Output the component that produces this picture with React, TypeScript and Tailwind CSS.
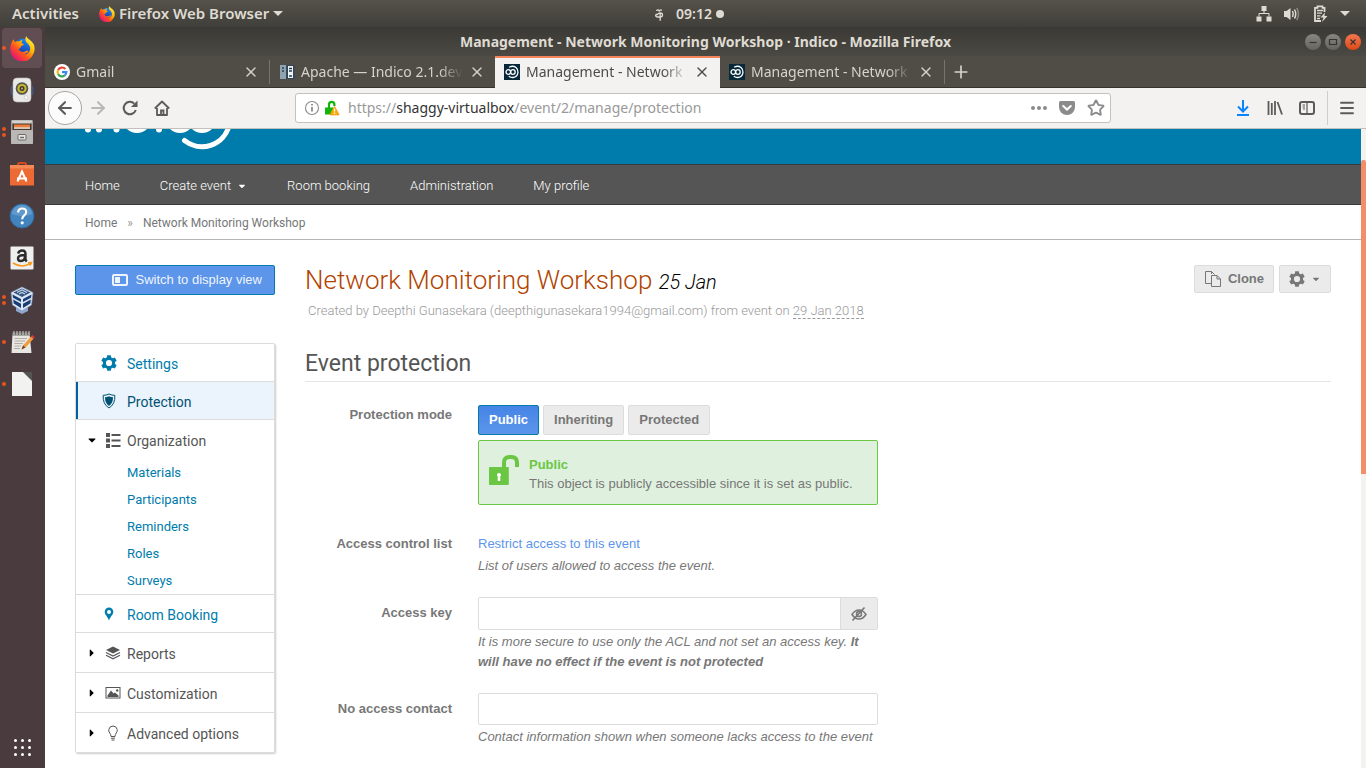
import React from "react";
import { X, Plus, ArrowLeft, ArrowRight, Menu, Star } from "lucide-react";
import { FaCaretDown, FaCaretRight } from "react-icons/fa";

interface IconProps {
  className?: string;
}

const FirefoxIcon: React.FC<IconProps> = ({ className }) => (
  <svg viewBox="0 0 24 24" className={className} aria-hidden="true">
    <defs>
      <linearGradient id="fx-body" x1="0.85" y1="0.1" x2="0.15" y2="0.9">
        <stop offset="0" stopColor="#fff23a" />
        <stop offset="0.35" stopColor="#ffb000" />
        <stop offset="0.65" stopColor="#ff5022" />
        <stop offset="1" stopColor="#e3107a" />
      </linearGradient>
      <linearGradient id="fx-globe" x1="0.7" y1="0" x2="0.3" y2="1">
        <stop offset="0" stopColor="#1a8cff" />
        <stop offset="1" stopColor="#1a2f96" />
      </linearGradient>
    </defs>
    <circle cx="12.5" cy="11" r="8.5" fill="url(#fx-globe)" />
    <path
      d="M15.5 0c1 3 5.500 4 7.500 8.500 1 3 .8 6.500-1 9.500A11.500 11.500 0 0 1 1 17C-.5 12.500.3 8 2.500 4.500L3.500 3l1 3C6 5 7 4.800 8.500 5.200L12 3.500 11 7c1 .4 2 .6 2.300 1-.3 1.200-2.500 1.300-3 2.500-.1 1-.9 1.600-2.300 1.800.8 2.700 4.500 4 7.500 2.200 1-.6 2-.5 2.200.2-1.200 2-3.500 3-5.700 2.700 5 1.200 8-3 7.200-6.700-.6-2-1.600-3-3-4.200C14.500 5 14.300 2.500 15.500 0z"
      fill="url(#fx-body)"
    />
  </svg>
);

const RhythmboxIcon = () => (
  <svg viewBox="0 0 26 26" className="size-[26px]" aria-hidden="true">
    <path d="M3 9a11 11 0 0 0 0 9M23 9a11 11 0 0 1 0 9" stroke="#46557a" strokeWidth="1.500" fill="none" />
    <rect x="4" y="1" width="18" height="24" rx="4" fill="#e9e9e7" stroke="#bbb" strokeWidth=".6" />
    <circle cx="13" cy="11.500" r="6.300" fill="#55564f" />
    <circle cx="13" cy="11.500" r="4.600" fill="#c9b62b" />
    <circle cx="13" cy="11.500" r="2.500" fill="#3c3c30" />
    <circle cx="13" cy="11.500" r="1" fill="#b9b7a0" />
    <circle cx="17" cy="20.500" r="1.800" fill="#fff" stroke="#bbb" strokeWidth=".6" />
  </svg>
);

const FilesIcon = () => (
  <svg viewBox="0 0 24 26" className="size-[26px]" aria-hidden="true">
    <rect x="1" y="1" width="22" height="24" rx="1.500" fill="#a3a29f" />
    <path d="M1.500 1.500h21l-2 4h-17z" fill="#d4d3d0" />
    <rect x="2.500" y="4.500" width="19" height="8" fill="#453632" />
    <path d="M4 5.500h16v3H4z" fill="#ef7c36" />
    <path d="M4 8.300h16v1.500H4z" fill="#f6ead8" />
    <rect x="1" y="11" width="22" height="14" rx="1" fill="#b9b8b5" />
    <rect x="8" y="15.500" width="8" height="5.500" rx="1" fill="#e7e6e4" stroke="#6b6a68" />
    <path d="M10 18.500h4" stroke="#6b6a68" strokeWidth="1.500" />
  </svg>
);

const SoftwareIcon = () => (
  <svg viewBox="0 0 26 26" className="size-[26px]" aria-hidden="true">
    <path d="M9 6V3.500Q9 2 10.500 2h5Q17 2 17 3.500V6" stroke="#d8481c" strokeWidth="2" fill="none" />
    <path d="M1 5h24v19.500H1z" fill="#ed6a34" />
    <path d="M1 4h24v3.500H1z" fill="#f58a55" />
    <path d="M8.500 20.500 13 10.500l4.500 10M8 17.500h10" stroke="#fff" strokeWidth="2" fill="none" />
  </svg>
);

const HelpIcon = () => (
  <svg viewBox="0 0 26 26" className="size-[26px]" aria-hidden="true">
    <circle cx="13" cy="13" r="12" fill="#4384bf" stroke="#2f6ba3" />
    <path d="M2.500 11a10.600 10.600 0 0 1 21 0q-10 4-21 0z" fill="#6ea3d3" opacity=".7" />
    <path d="M9 9.500q.5-4 4.200-4 4 0 4 3.500 0 2-2.200 3.600-1.800 1.300-1.800 3.600" stroke="#fff" strokeWidth="2.200" fill="none" />
    <circle cx="13.200" cy="19.800" r="1.600" fill="#fff" />
  </svg>
);

const AmazonIcon = () => (
  <svg viewBox="0 0 24 24" className="size-6" aria-hidden="true">
    <rect x=".5" y=".5" width="23" height="23" rx="1" fill="#efefef" />
    <path d="M8 7.500q1-3 4.300-3 3.200 0 3.200 3.500v5q0 1.300 1.300 2.500M15 9q-7 0-7 3.500 0 2.500 2.700 2.500 4.300 0 4.300-5" stroke="#2b2b2b" strokeWidth="2.400" fill="none" />
    <path d="M3 17q8.500 5.500 17.500.7M18 16.700l3.500-.2-1.500 3" stroke="#f79a1c" strokeWidth="1.500" fill="none" />
  </svg>
);

const VirtualBoxIcon = () => (
  <svg viewBox="0 0 26 28" className="h-7 w-[26px]" aria-hidden="true">
    <path d="M7 20l6 4 6-4v5l-6 3-6-3z" fill="#8ea7cf" />
    <path d="M13 1 24 6.500 22.500 19 13 25 3.500 19 2 6.500z" fill="#dce6f4" stroke="#7b93bb" strokeWidth=".6" />
    <path d="M13 2.500 21.500 6.500 13 11 4.500 6.500z" fill="#33557f" />
    <path d="M8 6.500 13 4l5 2.500M10 8l3-1.500L16 8" stroke="#c4d4ea" strokeWidth="1.200" fill="none" />
    <path d="M3.500 8.500 12 13v3L4 11.800zM4.200 13.500 12 17.800V22l-7.300-4.500zM22.500 8.500 14 13v3l8-4.200zM21.800 13.500 14 17.800V22l7.300-4.500z" fill="#173e73" />
  </svg>
);

const EditorIcon = () => (
  <svg viewBox="0 0 26 26" className="size-[26px]" aria-hidden="true">
    <path d="M3.500 4h17l2 20h-20z" fill="#e8e7e2" />
    <path d="M3 3.500h18v3H3z" fill="#6f6e6a" />
    <path d="M5 2v4M8 2v4M11 2v4M14 2v4M17 2v4M20 2v4" stroke="#d9d8d4" strokeWidth="1" />
    <path d="M5.500 9.500H18M5.500 12H16M5.500 14.500H14M5.500 17H12M5 19.500h6" stroke="#adaca8" strokeWidth="1" />
    <path d="m12.500 20.500 1.500-4 8-9 2.500 2.300-8 8.700z" fill="#f09b3c" />
    <path d="m22 7.500 1.300-1.500 2.500 2.300-1.300 1.500z" fill="#e1393d" />
    <path d="m12.500 20.500 1.500-4 2.500 2z" fill="#5b4632" />
  </svg>
);

const DocumentIcon = () => (
  <svg viewBox="0 0 24 26" className="h-[26px] w-6" aria-hidden="true">
    <path d="M2 1h12l8 8v16H2z" fill="#f2f2f1" />
    <path d="M13 1h9v9z" fill="#555" />
  </svg>
);

const GoogleIcon = () => (
  <svg viewBox="0 0 16 16" className="size-4 shrink-0" aria-hidden="true">
    <circle cx="8" cy="8" r="8" fill="#fff" />
    <g fill="none" strokeWidth="2.200">
      <path d="M11.300 4.900A4.400 4.400 0 0 0 4.100 6" stroke="#ea4335" />
      <path d="M4.100 6a4.400 4.400 0 0 0 0 4" stroke="#fbbc05" />
      <path d="M4.100 10a4.400 4.400 0 0 0 6.700 1.400" stroke="#34a853" />
      <path d="M10.800 11.400A4.400 4.400 0 0 0 12.400 8.100H8" stroke="#4285f4" />
    </g>
  </svg>
);

const ApacheDocsIcon = () => (
  <svg viewBox="0 0 16 16" className="size-4 shrink-0" aria-hidden="true">
    <rect x="1" y="1" width="6" height="14" fill="#8fa3b3" />
    <rect x="7.500" y="1" width="8" height="14" fill="#2f4758" />
    <rect x="9" y="2" width="5" height="12" fill="#eef3f5" />
    <path d="M3 4h2M3 7h2M10 4.500h3M10 7h3M10 12h3" stroke="#2b4050" strokeWidth="1.300" />
  </svg>
);

const IndicoFavicon = () => (
  <svg viewBox="0 0 16 16" className="size-4 shrink-0" aria-hidden="true">
    <rect width="16" height="16" fill="#07283a" />
    <g stroke="#fff" fill="none" strokeWidth="1.300">
      <circle cx="4.300" cy="8" r="2.300" />
      <circle cx="8.900" cy="8" r="2.300" />
      <path d="M5.500 3Q9 1.300 12 3.500q2.300 2 2 5-.6 4.500-5 5-2.300.1-3.700-1" strokeLinecap="round" />
    </g>
  </svg>
);

const GearIcon = () => (
  <svg viewBox="0 0 16 16" className="size-4" aria-hidden="true">
    <circle cx="8" cy="8" r="4.600" fill="none" stroke="currentColor" strokeWidth="3" />
    {[0, 60, 120, 180, 240, 300].map((angle) => (
      <path key={angle} d="M6.200.2h3.600l.5 3.300H5.700z" fill="currentColor" transform={`rotate(${angle} 8 8)`} />
    ))}
  </svg>
);

const dockItems = [
  { name: "Firefox", icon: <FirefoxIcon className="size-[25px]" />, dots: 1, active: true },
  { name: "Rhythmbox", icon: <RhythmboxIcon />, dots: 0 },
  { name: "Files", icon: <FilesIcon />, dots: 2 },
  { name: "Ubuntu Software", icon: <SoftwareIcon />, dots: 0 },
  { name: "Help", icon: <HelpIcon />, dots: 0 },
  { name: "Amazon", icon: <AmazonIcon />, dots: 0 },
  { name: "VirtualBox", icon: <VirtualBoxIcon />, dots: 2 },
  { name: "Text Editor", icon: <EditorIcon />, dots: 1 },
  { name: "LibreOffice", icon: <DocumentIcon />, dots: 1 },
];

const TopBar = () => (
  <header className="grid h-[27px] shrink-0 grid-cols-3 items-center bg-linear-to-b from-[#56524a] to-[#403f3a] pr-4 pl-3 font-semibold text-[#dfdbd2]">
    <div className="flex items-center gap-5 text-[15px]">
      <button>Activities</button>
      <button className="flex items-center gap-1">
        <FirefoxIcon className="size-4" />
        Firefox Web Browser
        <svg viewBox="0 0 10 5" className="h-[5px] w-[10px]" aria-hidden="true">
          <path d="M0 0h10L5 5z" fill="currentColor" />
        </svg>
      </button>
    </div>
    <div className="flex items-center justify-center gap-3 pl-4 text-sm">
      <svg viewBox="0 0 10 14" className="h-[14px] w-[10px]" fill="none" stroke="currentColor" strokeWidth="1.300" aria-hidden="true">
        <path d="M2.500 4q1.200-2.200 2.700 0 1.300-2 2.600-.4M1.500 7.500h2q1-1.500 2.700-1.500 2.300 0 2.300 2t-2.300 2H3.800Q1.600 10 1.600 8M6.200 6v7.800" />
      </svg>
      <button className="flex items-center gap-1">
        09:12
        <span className="size-2 rounded-full bg-[#dfdbd2]" />
      </button>
    </div>
    <button className="flex items-center justify-end gap-3" aria-label="System menu">
      <svg viewBox="0 0 16 16" className="size-4" aria-hidden="true">
        <path d="M5.500 0h5v5h-5zM.5 10.500h5v5h-5zM10.500 10.500h5v5h-5z" fill="currentColor" />
        <path d="M8 5v2.500M3 10.500v-3h10v3" stroke="currentColor" fill="none" />
      </svg>
      <svg viewBox="0 0 16 16" className="size-4" aria-hidden="true">
        <path d="M0 5h2.500L6.500 2v12l-4-3H0z" fill="currentColor" />
        <path d="M8.500 5q1.500 3 0 6M10.500 3.500q2.500 4.500 0 9" stroke="currentColor" strokeWidth="1.500" fill="none" />
        <path d="M12.700 2q3.600 6 0 12" stroke="#8a877f" strokeWidth="1.500" fill="none" />
      </svg>
      <svg viewBox="0 0 16 17" className="h-[17px] w-4" aria-hidden="true">
        <path d="M12.500 7V2.800H10.500V1.300h-5v1.500H3V16h6" stroke="currentColor" strokeWidth="1.800" fill="none" />
        <path d="M5 5.500h6M5 8.200h5M5 10.900h3.500M5 13.500h3" stroke="currentColor" strokeWidth="1.300" />
        <path d="m13 7.500-4.500 5h3L10 17l5.500-6h-3z" fill="currentColor" />
      </svg>
      <svg viewBox="0 0 10 5" className="h-[5px] w-[10px]" aria-hidden="true">
        <path d="M0 0h10L5 5z" fill="currentColor" />
      </svg>
    </button>
  </header>
);

const Dock = () => (
  <nav className="flex w-[45px] shrink-0 flex-col items-center bg-[#4a3b3f] pr-px" aria-label="Dock">
    {dockItems.map((item) => (
      <button key={item.name} aria-label={item.name} className="relative flex h-[42px] w-full items-center justify-center">
        <span
          className={`flex size-10 items-center justify-center rounded ${item.active ? "bg-[#604e53]" : ""}`}
        >
          {item.icon}
        </span>
        <span className="absolute inset-y-0 left-0.5 flex flex-col justify-center gap-0.5">
          {Array.from({ length: item.dots }, (_, i) => (
            <span key={i} className="size-1 rounded-full bg-[#e95420]" />
          ))}
        </span>
      </button>
    ))}
    <button aria-label="Show Applications" className="mt-auto mb-3 grid grid-cols-3 gap-1">
      {Array.from({ length: 9 }, (_, i) => (
        <span key={i} className="size-[3px] rounded-full bg-white" />
      ))}
    </button>
  </nav>
);

const tabs = [
  { title: "Gmail", icon: <GoogleIcon /> },
  { title: "Apache — Indico 2.1.dev0", icon: <ApacheDocsIcon /> },
  { title: "Management - Network Monitoring", icon: <IndicoFavicon />, active: true },
  { title: "Management - Network Monitoring", icon: <IndicoFavicon /> },
];

const WindowTitle = () => (
  <div className="relative flex h-[29px] shrink-0 items-center justify-center bg-linear-to-b from-[#3a3935] to-[#4b4943]">
    <h1 className="text-sm font-bold text-[#dfdbd2]">
      Management - Network Monitoring Workshop · Indico - Mozilla Firefox
    </h1>
    <div className="absolute right-[5px] flex gap-1">
      {["Minimize", "Maximize", "Close"].map((name) => (
        <button
          key={name}
          aria-label={name}
          className={`flex size-4 items-center justify-center rounded-full ${
            name === "Close"
              ? "bg-linear-to-b from-[#f4764d] to-[#dd4814]"
              : "bg-linear-to-b from-[#888680] to-[#66645e]"
          }`}
        >
          <svg viewBox="0 0 16 16" className="size-4" fill="none" stroke="#35342f" strokeWidth="1.200" aria-hidden="true">
            {name === "Minimize" && <path d="M4.500 8.500h7" />}
            {name === "Maximize" && <path d="M4.500 5.500h7v5h-7z" />}
            {name === "Close" && <path d="m5.500 5.500 5 5m0-5-5 5" />}
          </svg>
        </button>
      ))}
    </div>
  </div>
);

const TabStrip = () => (
  <div className="flex h-8 shrink-0 bg-[#504d46]">
    {tabs.map((tab, index) => (
      <div
        key={index}
        className={`flex w-[225px] items-center gap-1.5 pr-2.5 pl-[9px] text-sm ${
          tab.active
            ? "border-t-2 border-t-[#f58359] bg-[#f3f2f1] pb-0.5 text-[#4c4c4c]"
            : "border-b border-b-[#35342f] text-[#d7d3ca]"
        }`}
      >
        {tab.icon}
        <button className="min-w-0 flex-1 overflow-hidden mask-r-from-85% text-left whitespace-nowrap">
          {tab.title}
        </button>
        <button aria-label="Close tab">
          <X className="size-4" strokeWidth={2} />
        </button>
        {(index === 0 || index === 3) && <span className="-mr-2.5 ml-1 h-6 w-px bg-[#77746c]" />}
      </div>
    ))}
    <div className="flex flex-1 items-center border-b border-b-[#35342f] pl-1.5 text-[#d7d3ca]">
      <button aria-label="New tab">
        <Plus className="size-5" strokeWidth={2} />
      </button>
    </div>
  </div>
);

const BrowserToolbar = () => (
  <div className="flex h-[41px] shrink-0 items-center border-b border-[#c2c0bd] bg-[#f3f2f1] text-[#5b5b5b]">
    <div className="flex items-center pl-[3px]">
      <button aria-label="Back" className="flex size-[34px] items-center justify-center rounded-full border border-[#a6a5a3] bg-[#fbfbfb]">
        <ArrowLeft className="size-5" strokeWidth={2.5} />
      </button>
      <button aria-label="Forward" className="flex w-8 justify-center text-[#b9b8b7]">
        <ArrowRight className="size-5" strokeWidth={2.5} />
      </button>
      <button aria-label="Reload" className="flex w-8 justify-center">
        <svg viewBox="0 0 16 16" className="size-4" aria-hidden="true">
          <path d="M13.800 10A6.200 6.200 0 1 1 12.300 3.600" fill="none" stroke="currentColor" strokeWidth="2" />
          <path d="M15.500.5V7H9z" fill="currentColor" />
        </svg>
      </button>
      <button aria-label="Home" className="flex w-8 justify-center">
        <svg viewBox="0 0 16 16" className="size-4" fill="none" stroke="currentColor" strokeWidth="1.800" aria-hidden="true">
          <path d="M.8 8.500 8 1.500l7.200 7M3 8v7h10V8" strokeLinejoin="round" />
          <path d="M7 15v-4.500h2.500V15" />
        </svg>
      </button>
    </div>
    <div className="ml-[117px] flex h-[30px] w-[816px] items-center rounded-[3px] border border-[#c4c2bf] bg-white pr-[5px] pl-2 text-[#8b8b8b]">
      <button aria-label="Site information">
        <svg viewBox="0 0 16 16" className="size-4" fill="none" stroke="currentColor" aria-hidden="true">
          <circle cx="8" cy="8" r="6.500" strokeWidth="1.100" />
          <path d="M8 7v4.500M8 4v1.600" strokeWidth="1.800" />
        </svg>
      </button>
      <button aria-label="Connection warning" className="ml-1">
        <svg viewBox="0 0 16 16" className="size-4" aria-hidden="true">
          <path d="M5 8V4.500a2.700 2.700 0 0 1 5.400 0V6" stroke="#12b50c" strokeWidth="2.200" fill="none" />
          <path d="M1 7.500h8v7H1z" fill="#12b50c" />
          <path d="M10.500 6.500 15 14.800H6z" fill="#ffa90a" stroke="#f59b00" strokeLinejoin="round" />
          <path d="M10.500 8.500v3M10.500 12.500V14" stroke="#fff" strokeWidth="1.300" />
        </svg>
      </button>
      <a href="#address" className="ml-2 flex-1 text-sm text-[#999]">
        https://<span className="text-[#333]">shaggy-virtualbox</span>/event/2/manage/protection
      </a>
      <div className="flex items-center gap-3">
        <button aria-label="Page actions">
          <svg viewBox="0 0 16 16" className="size-4" fill="currentColor" aria-hidden="true">
            <circle cx="2" cy="8" r="2" />
            <circle cx="8" cy="8" r="2" />
            <circle cx="14" cy="8" r="2" />
          </svg>
        </button>
        <button aria-label="Save to Pocket">
          <svg viewBox="0 0 16 16" className="size-4" aria-hidden="true">
            <path d="M1.500 1h13Q16 1 16 2.500V7q0 3.300-2.300 5.700Q11.300 15 8 15t-5.700-2.300Q0 10.300 0 7V2.500Q0 1 1.500 1z" fill="currentColor" />
            <path d="M4.200 6 8 9.600 11.800 6" stroke="#fff" strokeWidth="2" fill="none" strokeLinecap="round" />
          </svg>
        </button>
        <button aria-label="Bookmark">
          <Star className="size-[18px]" strokeWidth={2.5} />
        </button>
      </div>
    </div>
    <div className="ml-auto flex items-center gap-4 pr-2.5">
      <button aria-label="Downloads" className="text-[#0a84ff]">
        <svg viewBox="0 0 16 16" className="size-4" fill="none" stroke="currentColor" strokeWidth="2" aria-hidden="true">
          <path d="M8 0v11M3 6.500l5 5 5-5M2 15h12" />
        </svg>
      </button>
      <button aria-label="Library">
        <svg viewBox="0 0 16 16" className="size-4" fill="none" stroke="currentColor" strokeWidth="1.800" aria-hidden="true">
          <path d="M1.500 1v14M4.800 3v12M8 1v14M10.500 2l4.500 12.500" />
        </svg>
      </button>
      <button aria-label="Sidebars">
        <svg viewBox="0 0 16 16" className="size-4" fill="none" stroke="currentColor" aria-hidden="true">
          <rect x="1" y="2" width="14" height="12" rx="2" strokeWidth="2" />
          <path d="M8 2v12M3.500 5H6M3.500 7H6M4 9h2" strokeWidth="1.200" />
        </svg>
      </button>
      <span className="-mr-1.5 -ml-1 h-[34px] w-px bg-[#d0cecb]" />
      <button aria-label="Open menu">
        <Menu className="size-[18px]" strokeWidth={2.5} />
      </button>
    </div>
  </div>
);

const IndicoLogo = () => (
  <svg viewBox="0 0 160 24" className="h-6 w-40" fill="none" stroke="#fff" strokeWidth="6" strokeLinecap="round" aria-label="indico" role="img">
    <path d="M10-4V0.500M21-4V0.500M38.500-4V0.500M81-4V0.500" />
    <circle cx="59" cy="-10.500" r="11.500" />
    <circle cx="102" cy="-10.500" r="11.500" />
    <circle cx="124" cy="-10.500" r="11.500" />
    <path d="M106.500 11.500A28 28 0 0 0 151-3" strokeWidth="5" />
  </svg>
);

const navLinks = ["Home", "Create event", "Room booking", "Administration", "My profile"];

const SiteHeader = () => (
  <>
    <div className="h-[35px] shrink-0 overflow-hidden bg-[#007cac] pl-[33px]">
      <IndicoLogo />
    </div>
    <nav className="flex h-[41px] shrink-0 items-center gap-10 border-y border-[#3b3b3b] bg-[#555] px-10 pt-0.5 font-[Roboto,sans-serif] text-[13px] font-light text-white">
      {navLinks.map((link) => (
        <a key={link} href="#nav" className="flex items-center gap-1.5">
          {link}
          {link === "Create event" && <FaCaretDown className="size-2.5" />}
        </a>
      ))}
    </nav>
    <div className="flex h-[35px] shrink-0 items-center gap-2.5 border-b border-[#b5b5b5] px-10 pt-0.5 font-[Roboto,sans-serif] text-xs text-[#777]">
      <a href="#home">Home</a>
      <span className="text-[#999]">»</span>
      <a href="#event">Network Monitoring Workshop</a>
    </div>
  </>
);

const ShieldIcon = () => (
  <svg viewBox="0 0 14 16" className="h-4 w-3.5" aria-hidden="true">
    <path d="M7 1q3 1.500 5.800 1.300Q13.500 11 7 15 .5 11 1.200 2.300 4 2.500 7 1z" fill="none" stroke="currentColor" />
    <path d="M7 3.300q2 .9 4 .9Q11.200 10 7 13 2.800 10 3 4.200q2 0 4-.9z" fill="currentColor" />
  </svg>
);

const ListIcon = () => (
  <svg viewBox="0 0 16 16" className="size-4" fill="currentColor" aria-hidden="true">
    <path d="M1 1h4v4H1zM1 6.500h4v4H1zM1 12h4v4H1zM6.500 2h9v2h-9zM6.500 7.500h9v2h-9zM6.500 13h9v2h-9z" />
  </svg>
);

const PinIcon = () => (
  <svg viewBox="0 0 10 14" className="h-3.5 w-2.5" aria-hidden="true">
    <path fillRule="evenodd" d="M5 .5a4.300 4.300 0 0 1 4.300 4.300C9.300 7.500 6.500 9.500 5 13.500 3.500 9.500.7 7.500.7 4.800A4.300 4.300 0 0 1 5 .5zM5 3a2 2 0 1 0 0 4 2 2 0 0 0 0-4z" fill="currentColor" />
  </svg>
);

const LayersIcon = () => (
  <svg viewBox="0 0 16 14" className="h-3.5 w-4" aria-hidden="true">
    <path d="M8 .5 15 4 8 7.500 1 4z" fill="currentColor" />
    <path d="m1 6.500 7 3.500 7-3.500M1 9.300l7 3.500 7-3.500" stroke="currentColor" strokeWidth="1.200" fill="none" />
  </svg>
);

const ImageIcon = () => (
  <svg viewBox="0 0 16 12" className="h-3 w-4" aria-hidden="true">
    <rect x="1" y=".5" width="14" height="10.500" fill="none" stroke="currentColor" />
    <path d="M2.500 10V8.500L6 3.500l2.500 3 1.500-1 3.500 3V10z" fill="currentColor" />
    <circle cx="12.200" cy="3.500" r="1.200" fill="currentColor" />
  </svg>
);

const BulbIcon = () => (
  <svg viewBox="0 0 12 16" className="h-4 w-3" fill="none" stroke="currentColor" aria-hidden="true">
    <path d="M4 11.500Q4 9.500 2.700 8 1.500 6.500 1.800 4.500 2.500 1 6 1t4.200 3.500Q10.500 6.500 9.300 8 8 9.500 8 11.500zM4 13.200h4M4.500 15h3" />
  </svg>
);

interface SideSection {
  title: string;
  icon: React.ReactNode;
  kind: "link" | "group";
  selected?: boolean;
  children?: string[];
}

const sections: SideSection[] = [
  { title: "Settings", icon: <GearIcon />, kind: "link" },
  { title: "Protection", icon: <ShieldIcon />, kind: "link", selected: true },
  {
    title: "Organization",
    icon: <ListIcon />,
    kind: "group",
    children: ["Materials", "Participants", "Reminders", "Roles", "Surveys"],
  },
  { title: "Room Booking", icon: <PinIcon />, kind: "link" },
  { title: "Reports", icon: <LayersIcon />, kind: "group" },
  { title: "Customization", icon: <ImageIcon />, kind: "group" },
  { title: "Advanced options", icon: <BulbIcon />, kind: "group" },
];

const SideMenu = () => (
  <aside className="w-[200px] shrink-0">
    <a
      href="#display"
      className="flex h-[30px] items-center justify-end gap-2 rounded-xs border border-[#007cac] bg-[#5c95ea] pr-3 text-[13px] text-[#eef4fd]"
    >
      <svg viewBox="0 0 16 12" className="h-3 w-4" aria-hidden="true">
        <rect x="1" y="1" width="14" height="10" rx="1" fill="none" stroke="currentColor" strokeWidth="2" />
        <rect x="3" y="3" width="5" height="6" fill="currentColor" />
      </svg>
      Switch to display view
    </a>
    <ul className="mt-12 rounded-xs border border-[#dcdcdc] font-[Roboto,sans-serif] text-sm shadow-[1px_1px_2px_#ccc]">
      {sections.map((section) => (
        <li key={section.title} className="border-b border-[#dcdcdc] last:border-b-0">
          {section.kind === "link" ? (
            <a
              href="#section"
              className={`flex h-[37px] items-center ${
                section.selected
                  ? "border-l-2 border-[#0060a0] bg-[#ebf3fc] text-[#005272]"
                  : "border-l-2 border-transparent text-[#007cac]"
              }`}
            >
              <span className="ml-[21px] flex w-5 justify-center">{section.icon}</span>
              <span className="ml-2 pt-0.5">{section.title}</span>
            </a>
          ) : (
            <button className="flex h-[39px] w-full items-center text-[#555]">
              <span className="ml-2.5 w-3 text-black">
                {section.children ? <FaCaretDown className="size-3" /> : <FaCaretRight className="size-3" />}
              </span>
              <span className="ml-1.5 flex w-[18px] justify-center">{section.icon}</span>
              <span className="ml-[5px] pt-0.5">{section.title}</span>
            </button>
          )}
          {section.children && (
            <ul className="text-[13px] leading-[27px] text-[#007cac]">
              {section.children.map((child) => (
                <li key={child} className="pl-[51px]">
                  <a href="#child">{child}</a>
                </li>
              ))}
            </ul>
          )}
        </li>
      ))}
    </ul>
  </aside>
);

interface FieldProps {
  label: string;
  htmlFor?: string;
  labelClass?: string;
  children: React.ReactNode;
}

const Field: React.FC<FieldProps> = ({ label, htmlFor, labelClass = "", children }) => (
  <div className="flex gap-[26px]">
    <label htmlFor={htmlFor} className={`w-[147px] shrink-0 text-right font-bold ${labelClass}`}>
      {label}
    </label>
    <div className="w-[400px]">{children}</div>
  </div>
);

const ProtectionForm = () => (
  <form className="mt-[23px] flex flex-col gap-[21px] text-[13px] leading-5 text-[#777]">
    <Field label="Protection mode">
      <div className="flex gap-1 font-bold">
        <button type="button" className="h-[30px] rounded-xs border border-[#007cac] bg-linear-to-b from-[#4584e6] to-[#5c95ea] px-2.5 text-white">
          Public
        </button>
        <button type="button" className="h-[30px] rounded-xs border border-[#dcdcdc] bg-[#ebebeb] px-2.5">
          Inheriting
        </button>
        <button type="button" className="h-[30px] rounded-xs border border-[#dcdcdc] bg-[#ebebeb] px-2.5">
          Protected
        </button>
      </div>
      <div className="mt-[5px] mb-2 flex h-[65px] gap-2.5 rounded-xs border border-[#6bc644] bg-[#dff1de] px-2.5 pt-3.5">
        <svg viewBox="0 0 30 30" className="size-[30px] shrink-0 text-[#6bc644]" aria-hidden="true">
          <path d="M15 13V7.500Q15 2 20.500 2h2Q28 2 28 7.500V12" stroke="currentColor" strokeWidth="4" fill="none" />
          <path d="M1 12h18q.8 0 .8.8V29q0 1-1 1H1q-1 0-1-1V13q0-1 1-1z" fill="currentColor" />
          <path d="M10 18a2 2 0 0 1 1.300 3.500V26H8.700v-4.500A2 2 0 0 1 10 18z" fill="#fff" />
        </svg>
        <div className="leading-[19px]">
          <strong className="block text-[#6bc644]">Public</strong>
          <span>This object is publicly accessible since it is set as public.</span>
        </div>
      </div>
    </Field>
    <Field label="Access control list">
      <a href="#restrict" className="text-[#5c95ea]">
        Restrict access to this event
      </a>
      <p className="mt-0.5 italic">List of users allowed to access the event.</p>
    </Field>
    <Field label="Access key" htmlFor="access-key" labelClass="pt-1.5">
      <div className="flex h-[33px] rounded-xs border border-[#dcdcdc]">
        <input id="access-key" type="text" className="min-w-0 flex-1 px-2 outline-none" />
        <button type="button" aria-label="Show access key" className="flex w-[37px] items-center justify-center border-l border-[#dcdcdc] bg-[#ebebeb]">
          <svg viewBox="0 0 16 16" className="size-4" fill="none" stroke="currentColor" strokeWidth="1.500" aria-hidden="true">
            <path d="M1 8.500Q4 4 8 4t7 4.500Q12 13 8 13T1 8.500z" />
            <circle cx="8" cy="8" r="2.500" />
            <path d="M1.500 14.500 13.500 1.500" strokeWidth="1.700" />
          </svg>
        </button>
      </div>
      <p className="mt-0.5 italic">
        It is more secure to use only the ACL and not set an access key.{" "}
        <strong>It will have no effect if the event is not protected</strong>
      </p>
    </Field>
    <Field label="No access contact" htmlFor="no-access-contact" labelClass="pt-1.5">
      <input id="no-access-contact" type="text" className="block h-8 w-full rounded-xs border border-[#dcdcdc] px-2 outline-none" />
      <p className="mt-0.5 italic">Contact information shown when someone lacks access to the event</p>
    </Field>
  </form>
);

const EventPage = () => (
  <main className="min-w-0 flex-1">
    <div className="flex items-start justify-between font-[Roboto,sans-serif]">
      <div>
        <h2 className="text-[26px] leading-[30px] font-light text-[#b14300]">
          Network Monitoring Workshop <em className="text-xl text-black">25 Jan</em>
        </h2>
        <p className="mt-[5px] pl-[3px] text-[13px] leading-5 font-light text-[#999]">
          Created by Deepthi Gunasekara (deepthigunasekara1994@gmail.com) from event on{" "}
          <a href="#origin" className="border-b border-dashed border-[#999]">
            29 Jan 2018
          </a>
        </p>
      </div>
      <div className="flex gap-[5px] font-['Liberation_Sans',sans-serif] text-[13px] font-bold text-[#777]">
        <button className="flex h-7 items-center gap-1.5 rounded-xs border border-[#dcdcdc] bg-[#ebebeb] px-[9px]">
          <svg viewBox="0 0 18 18" className="size-[18px]" fill="none" stroke="currentColor" aria-hidden="true">
            <path d="M7 13.500H1.500v-12h6l3 3M7.500 5.500H13l3.500 3.500v7.500h-9zM7.500 1.500V4M13 5.500V9h3.500" />
          </svg>
          Clone
        </button>
        <button aria-label="Event actions" className="flex h-7 items-center gap-1.5 rounded-xs border border-[#dcdcdc] bg-[#ebebeb] px-[9px]">
          <GearIcon />
          <FaCaretDown className="size-2.5" />
        </button>
      </div>
    </div>
    <h3 className="mt-[29px] border-b border-[#e5e5e5] pb-[3px] font-[Roboto,sans-serif] text-[23px] leading-7 text-[#555]">
      Event protection
    </h3>
    <ProtectionForm />
  </main>
);

const App: React.FC = () => (
  <div className="flex h-screen flex-col overflow-hidden bg-white font-['Noto_Sans',sans-serif]">
    <TopBar />
    <div className="flex min-h-0 flex-1">
      <Dock />
      <div className="flex min-w-0 flex-1 flex-col">
        <WindowTitle />
        <TabStrip />
        <BrowserToolbar />
        <div className="flex min-h-0 flex-1">
          <div className="flex min-w-0 flex-1 flex-col overflow-hidden font-['Liberation_Sans',sans-serif]">
            <SiteHeader />
            <div className="flex gap-[30px] px-[30px] pt-[25px]">
              <SideMenu />
              <EventPage />
            </div>
          </div>
          <div className="w-[5px] shrink-0 bg-[#f3f2f1] pt-[31px]">
            <div className="h-[314px] rounded-t-xs bg-[#f28e69]" />
          </div>
        </div>
      </div>
    </div>
  </div>
);

export default App;
